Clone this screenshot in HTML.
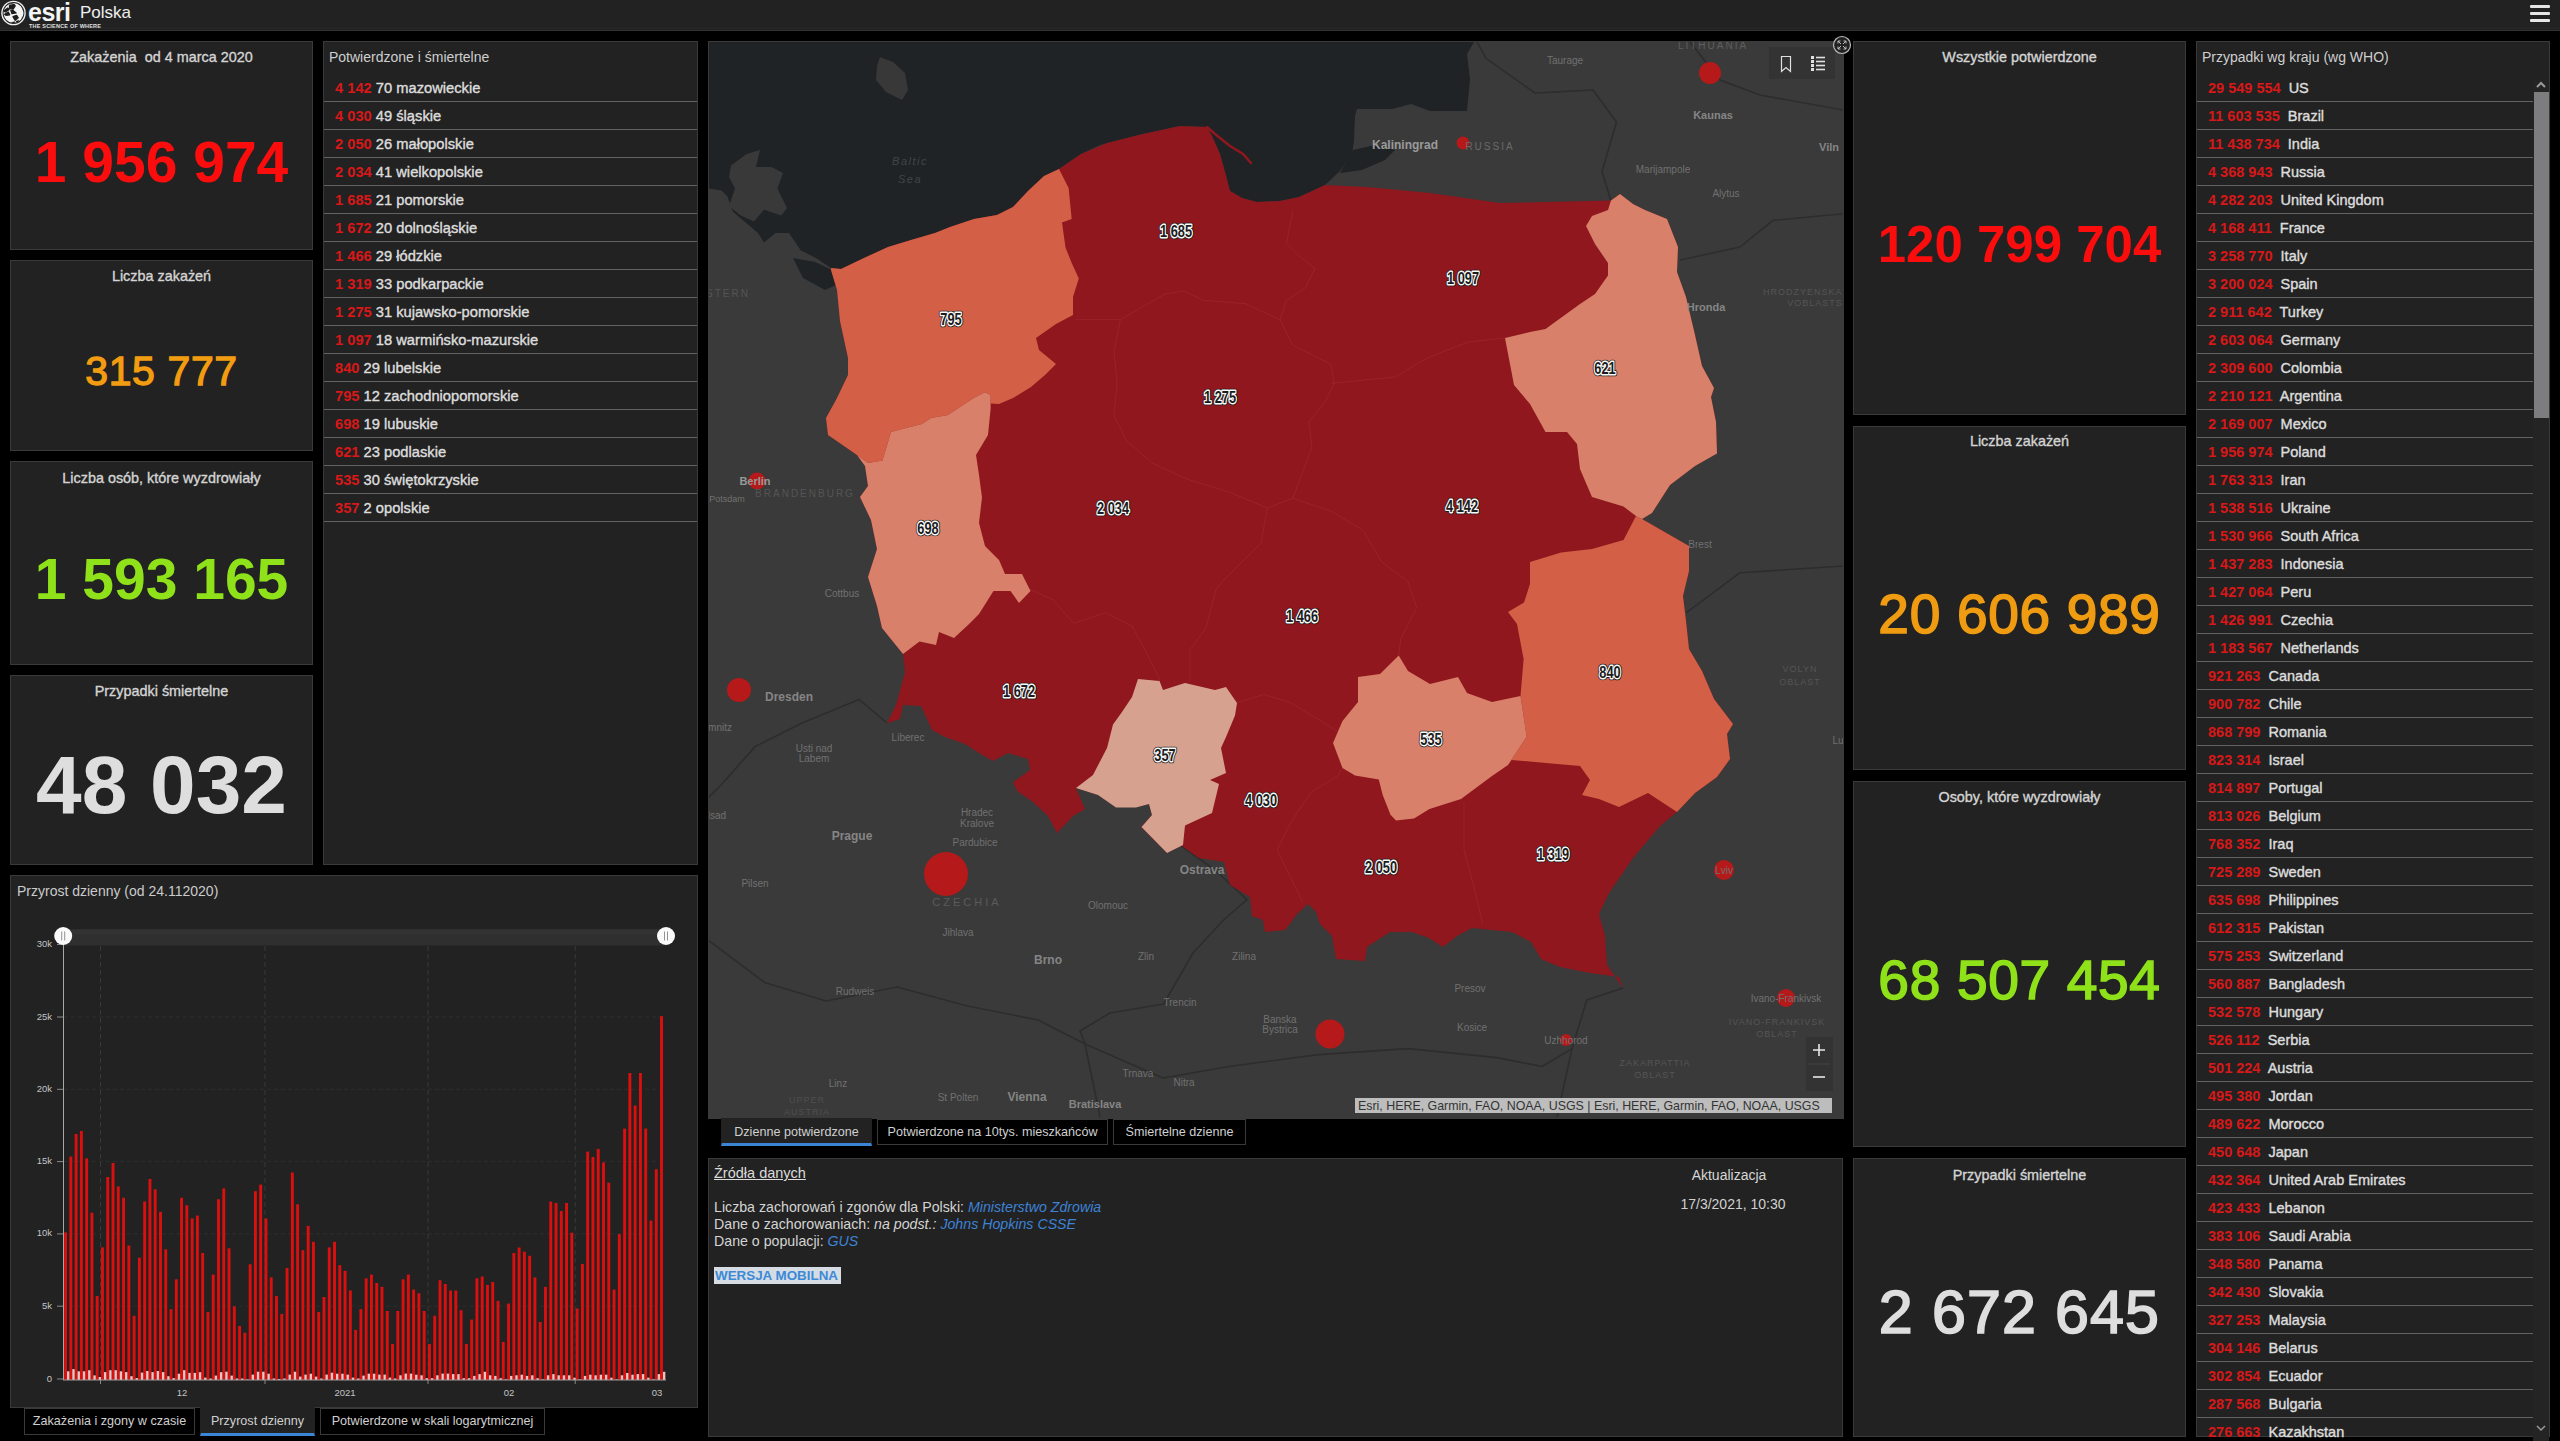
<!DOCTYPE html><html><head><meta charset="utf-8"><title>COVID-19 Polska</title><style>
*{box-sizing:border-box}
html,body{margin:0;padding:0;background:#000;width:2560px;height:1441px;overflow:hidden;font-family:"Liberation Sans",sans-serif;color:#d6d6d6}
.abs{position:absolute}
.hdr{position:absolute;left:0;top:0;width:2560px;height:31px;background:linear-gradient(#222 0,#222 28px,#282828 28px,#282828 29px,#1f1f1f 29px,#1f1f1f 30px,#343434 30px,#343434 31px)}
.pnl{position:absolute;background:#222;border:1px solid #3a3a3a}
.ttl{position:absolute;left:0;right:0;text-align:center;font-size:14.4px;font-weight:normal;-webkit-text-stroke:0.35px #d4d4d4;color:#d4d4d4;white-space:nowrap}
.num{position:absolute;left:0;right:0;text-align:center;font-weight:bold;white-space:nowrap;line-height:1}
.lt{position:absolute;font-size:14px;color:#cfcfcf;white-space:nowrap}
.row{position:absolute;left:0;height:28px;border-bottom:1px solid #626262;font-size:14.7px;font-weight:normal;-webkit-text-stroke:0.4px #dcdcdc;color:#dcdcdc;white-space:nowrap;line-height:28px}
.row b{color:#d81818;font-weight:bold;-webkit-text-stroke:0}
.tab{position:absolute;background:#000;border:1px solid #3a3a3a;font-size:12.6px;color:#d0d0d0;text-align:center;white-space:nowrap}
.tab.act{background:#222;border-color:#222;border-bottom:3px solid #3a86d4}
.ml{position:absolute;font-size:11px;color:#8a8a8a;white-space:nowrap;font-weight:bold;transform:translate(-50%,-50%)}
</style></head><body>
<div class="hdr"></div>
<svg class="abs" style="left:0;top:0" width="30" height="30" viewBox="0 0 30 30">
<circle cx="13.5" cy="13" r="11.6" fill="none" stroke="#f0f0f0" stroke-width="1.4"/>
<circle cx="13.5" cy="13" r="10" fill="#f4f4f4"/>
<clipPath id="gclip"><circle cx="13.5" cy="13" r="10"/></clipPath><g clip-path="url(#gclip)"><g fill="#1d1d1d" stroke="#1d1d1d" stroke-width="1.1" stroke-linejoin="round" transform="translate(13.5,13) scale(1.15) translate(-13.5,-13)">
<path d="M9 3.2 L12 2.4 L13.2 4 L10.2 5.2 Z"/>
<path d="M14.5 2.3 L18.5 3.2 L17.5 4.5 L14.6 3.6 Z"/>
<path d="M10 6.6 L13.8 5.4 L15 6.8 L13.2 9.6 L10.2 9.2 Z"/>
<path d="M4.8 11.2 L8.6 8.6 L9.6 10.1 L6.4 12.2 Z"/>
<path d="M5.8 14.2 L9 12.2 L10.2 14.6 L7 15 Z"/>
<path d="M11.2 10.8 L12.6 10.4 L15.8 13 L12.2 13.6 Z"/>
<path d="M13 16.2 L16.2 15 L17.6 17.2 L15 19.4 Z"/>
<path d="M16.2 20.2 L18 19.8 L18.6 22.6 L17 23 Z"/>
<path d="M12 21.4 L14.6 21 L14.8 23.4 L12.6 23.2 Z"/>
<path d="M3.2 15 L4.6 15.4 L6 19.6 L4.6 19.2 Z"/>
<path d="M21.6 7.6 L23 9 L22.8 10.6 L21.4 9.6 Z"/>
<path d="M21.4 16.6 L23 16.2 L22 19.8 L20.8 19.6 Z"/>
<path d="M4.2 7.6 L6 5.6 L6.6 6.6 L4.8 8.6 Z"/>
</g></g>
</svg>
<div class="abs" style="left:28px;top:-2px;font-size:25px;font-weight:bold;color:#f4f4f4;letter-spacing:-0.5px">esri</div>
<div class="abs" style="left:80px;top:3px;font-size:17px;color:#f0f0f0">Polska</div>
<div class="abs" style="left:29px;top:23px;font-size:5.5px;font-weight:bold;color:#e0e0e0;letter-spacing:0.2px">THE SCIENCE OF WHERE</div>
<div class="abs" style="left:2530px;top:5px;width:20px;height:3px;background:#e6e6e6;border-radius:1px"></div>
<div class="abs" style="left:2530px;top:12px;width:20px;height:3px;background:#e6e6e6;border-radius:1px"></div>
<div class="abs" style="left:2530px;top:19px;width:20px;height:3px;background:#e6e6e6;border-radius:1px"></div>
<div class="pnl" style="left:10px;top:41px;width:303px;height:209px;"><div class="ttl" style="top:7px">Zakażenia&nbsp; od 4 marca 2020</div><div class="num" style="top:91.5px;font-size:57px;color:#fb0d0d;font-weight:bold;letter-spacing:0px;">1 956 974</div></div>
<div class="pnl" style="left:10px;top:260px;width:303px;height:191px;"><div class="ttl" style="top:7px">Liczba zakażeń</div><div class="num" style="top:90.0px;font-size:41px;color:#f29c11;font-weight:normal;letter-spacing:0.6px;-webkit-text-stroke:1.3px #f29c11;">315 777</div></div>
<div class="pnl" style="left:10px;top:461px;width:303px;height:204px;"><div class="ttl" style="top:7.5px">Liczba osób, które wyzdrowiały</div><div class="num" style="top:88.5px;font-size:57px;color:#8fe11a;font-weight:bold;letter-spacing:0px;">1 593 165</div></div>
<div class="pnl" style="left:10px;top:675px;width:303px;height:190px;"><div class="ttl" style="top:7px">Przypadki śmiertelne</div><div class="num" style="top:68.0px;font-size:82px;color:#dedede;font-weight:bold;letter-spacing:0px;">48 032</div></div>
<div class="pnl" style="left:1853px;top:41px;width:333px;height:374px;"><div class="ttl" style="top:7px">Wszystkie potwierdzone</div><div class="num" style="top:176.5px;font-size:51px;color:#fb0d0d;font-weight:bold;letter-spacing:0px;">120 799 704</div></div>
<div class="pnl" style="left:1853px;top:426px;width:333px;height:344px;"><div class="ttl" style="top:6px">Liczba zakażeń</div><div class="num" style="top:159.5px;font-size:55px;color:#ef9c12;font-weight:normal;letter-spacing:0.7px;-webkit-text-stroke:1.6px #ef9c12;">20 606 989</div></div>
<div class="pnl" style="left:1853px;top:781px;width:333px;height:366px;"><div class="ttl" style="top:7px">Osoby, które wyzdrowiały</div><div class="num" style="top:170.5px;font-size:55px;color:#8fe11a;font-weight:normal;letter-spacing:0.7px;-webkit-text-stroke:1.6px #8fe11a;">68 507 454</div></div>
<div class="pnl" style="left:1853px;top:1158px;width:333px;height:279px;"><div class="ttl" style="top:7.5px">Przypadki śmiertelne</div><div class="num" style="top:122.5px;font-size:61px;color:#dedede;font-weight:normal;letter-spacing:1.1px;-webkit-text-stroke:1.7px #dedede;">2 672 645</div></div>
<div class="pnl" style="left:323px;top:41px;width:375px;height:824px;"><div class="lt" style="left:5px;top:7px">Potwierdzone i śmiertelne</div><div class="row" style="top:32px;width:373px;padding-left:11px"><b>4 142</b> 70 mazowieckie</div><div class="row" style="top:60px;width:373px;padding-left:11px"><b>4 030</b> 49 śląskie</div><div class="row" style="top:88px;width:373px;padding-left:11px"><b>2 050</b> 26 małopolskie</div><div class="row" style="top:116px;width:373px;padding-left:11px"><b>2 034</b> 41 wielkopolskie</div><div class="row" style="top:144px;width:373px;padding-left:11px"><b>1 685</b> 21 pomorskie</div><div class="row" style="top:172px;width:373px;padding-left:11px"><b>1 672</b> 20 dolnośląskie</div><div class="row" style="top:200px;width:373px;padding-left:11px"><b>1 466</b> 29 łódzkie</div><div class="row" style="top:228px;width:373px;padding-left:11px"><b>1 319</b> 33 podkarpackie</div><div class="row" style="top:256px;width:373px;padding-left:11px"><b>1 275</b> 31 kujawsko-pomorskie</div><div class="row" style="top:284px;width:373px;padding-left:11px"><b>1 097</b> 18 warmińsko-mazurskie</div><div class="row" style="top:312px;width:373px;padding-left:11px"><b>840</b> 29 lubelskie</div><div class="row" style="top:340px;width:373px;padding-left:11px"><b>795</b> 12 zachodniopomorskie</div><div class="row" style="top:368px;width:373px;padding-left:11px"><b>698</b> 19 lubuskie</div><div class="row" style="top:396px;width:373px;padding-left:11px"><b>621</b> 23 podlaskie</div><div class="row" style="top:424px;width:373px;padding-left:11px"><b>535</b> 30 świętokrzyskie</div><div class="row" style="top:452px;width:373px;padding-left:11px"><b>357</b> 2 opolskie</div></div>
<div class="pnl" style="left:2196px;top:41px;width:354px;height:1396px;"><div class="lt" style="left:5px;top:7px">Przypadki wg kraju (wg WHO)</div><div class="abs" style="left:0;top:32px;width:352px;height:1404px;overflow:hidden"><div class="row" style="top:0px;width:337px;padding-left:11px;font-size:14.5px"><b>29 549 554</b>&nbsp; US</div><div class="row" style="top:28px;width:337px;padding-left:11px;font-size:14.5px"><b>11 603 535</b>&nbsp; Brazil</div><div class="row" style="top:56px;width:337px;padding-left:11px;font-size:14.5px"><b>11 438 734</b>&nbsp; India</div><div class="row" style="top:84px;width:337px;padding-left:11px;font-size:14.5px"><b>4 368 943</b>&nbsp; Russia</div><div class="row" style="top:112px;width:337px;padding-left:11px;font-size:14.5px"><b>4 282 203</b>&nbsp; United Kingdom</div><div class="row" style="top:140px;width:337px;padding-left:11px;font-size:14.5px"><b>4 168 411</b>&nbsp; France</div><div class="row" style="top:168px;width:337px;padding-left:11px;font-size:14.5px"><b>3 258 770</b>&nbsp; Italy</div><div class="row" style="top:196px;width:337px;padding-left:11px;font-size:14.5px"><b>3 200 024</b>&nbsp; Spain</div><div class="row" style="top:224px;width:337px;padding-left:11px;font-size:14.5px"><b>2 911 642</b>&nbsp; Turkey</div><div class="row" style="top:252px;width:337px;padding-left:11px;font-size:14.5px"><b>2 603 064</b>&nbsp; Germany</div><div class="row" style="top:280px;width:337px;padding-left:11px;font-size:14.5px"><b>2 309 600</b>&nbsp; Colombia</div><div class="row" style="top:308px;width:337px;padding-left:11px;font-size:14.5px"><b>2 210 121</b>&nbsp; Argentina</div><div class="row" style="top:336px;width:337px;padding-left:11px;font-size:14.5px"><b>2 169 007</b>&nbsp; Mexico</div><div class="row" style="top:364px;width:337px;padding-left:11px;font-size:14.5px"><b>1 956 974</b>&nbsp; Poland</div><div class="row" style="top:392px;width:337px;padding-left:11px;font-size:14.5px"><b>1 763 313</b>&nbsp; Iran</div><div class="row" style="top:420px;width:337px;padding-left:11px;font-size:14.5px"><b>1 538 516</b>&nbsp; Ukraine</div><div class="row" style="top:448px;width:337px;padding-left:11px;font-size:14.5px"><b>1 530 966</b>&nbsp; South Africa</div><div class="row" style="top:476px;width:337px;padding-left:11px;font-size:14.5px"><b>1 437 283</b>&nbsp; Indonesia</div><div class="row" style="top:504px;width:337px;padding-left:11px;font-size:14.5px"><b>1 427 064</b>&nbsp; Peru</div><div class="row" style="top:532px;width:337px;padding-left:11px;font-size:14.5px"><b>1 426 991</b>&nbsp; Czechia</div><div class="row" style="top:560px;width:337px;padding-left:11px;font-size:14.5px"><b>1 183 567</b>&nbsp; Netherlands</div><div class="row" style="top:588px;width:337px;padding-left:11px;font-size:14.5px"><b>921 263</b>&nbsp; Canada</div><div class="row" style="top:616px;width:337px;padding-left:11px;font-size:14.5px"><b>900 782</b>&nbsp; Chile</div><div class="row" style="top:644px;width:337px;padding-left:11px;font-size:14.5px"><b>868 799</b>&nbsp; Romania</div><div class="row" style="top:672px;width:337px;padding-left:11px;font-size:14.5px"><b>823 314</b>&nbsp; Israel</div><div class="row" style="top:700px;width:337px;padding-left:11px;font-size:14.5px"><b>814 897</b>&nbsp; Portugal</div><div class="row" style="top:728px;width:337px;padding-left:11px;font-size:14.5px"><b>813 026</b>&nbsp; Belgium</div><div class="row" style="top:756px;width:337px;padding-left:11px;font-size:14.5px"><b>768 352</b>&nbsp; Iraq</div><div class="row" style="top:784px;width:337px;padding-left:11px;font-size:14.5px"><b>725 289</b>&nbsp; Sweden</div><div class="row" style="top:812px;width:337px;padding-left:11px;font-size:14.5px"><b>635 698</b>&nbsp; Philippines</div><div class="row" style="top:840px;width:337px;padding-left:11px;font-size:14.5px"><b>612 315</b>&nbsp; Pakistan</div><div class="row" style="top:868px;width:337px;padding-left:11px;font-size:14.5px"><b>575 253</b>&nbsp; Switzerland</div><div class="row" style="top:896px;width:337px;padding-left:11px;font-size:14.5px"><b>560 887</b>&nbsp; Bangladesh</div><div class="row" style="top:924px;width:337px;padding-left:11px;font-size:14.5px"><b>532 578</b>&nbsp; Hungary</div><div class="row" style="top:952px;width:337px;padding-left:11px;font-size:14.5px"><b>526 112</b>&nbsp; Serbia</div><div class="row" style="top:980px;width:337px;padding-left:11px;font-size:14.5px"><b>501 224</b>&nbsp; Austria</div><div class="row" style="top:1008px;width:337px;padding-left:11px;font-size:14.5px"><b>495 380</b>&nbsp; Jordan</div><div class="row" style="top:1036px;width:337px;padding-left:11px;font-size:14.5px"><b>489 622</b>&nbsp; Morocco</div><div class="row" style="top:1064px;width:337px;padding-left:11px;font-size:14.5px"><b>450 648</b>&nbsp; Japan</div><div class="row" style="top:1092px;width:337px;padding-left:11px;font-size:14.5px"><b>432 364</b>&nbsp; United Arab Emirates</div><div class="row" style="top:1120px;width:337px;padding-left:11px;font-size:14.5px"><b>423 433</b>&nbsp; Lebanon</div><div class="row" style="top:1148px;width:337px;padding-left:11px;font-size:14.5px"><b>383 106</b>&nbsp; Saudi Arabia</div><div class="row" style="top:1176px;width:337px;padding-left:11px;font-size:14.5px"><b>348 580</b>&nbsp; Panama</div><div class="row" style="top:1204px;width:337px;padding-left:11px;font-size:14.5px"><b>342 430</b>&nbsp; Slovakia</div><div class="row" style="top:1232px;width:337px;padding-left:11px;font-size:14.5px"><b>327 253</b>&nbsp; Malaysia</div><div class="row" style="top:1260px;width:337px;padding-left:11px;font-size:14.5px"><b>304 146</b>&nbsp; Belarus</div><div class="row" style="top:1288px;width:337px;padding-left:11px;font-size:14.5px"><b>302 854</b>&nbsp; Ecuador</div><div class="row" style="top:1316px;width:337px;padding-left:11px;font-size:14.5px"><b>287 568</b>&nbsp; Bulgaria</div><div class="row" style="top:1344px;width:337px;padding-left:11px;font-size:14.5px"><b>276 663</b>&nbsp; Kazakhstan</div></div><div class="abs" style="left:336px;top:38px;width:16px;height:1398px;background:#242424"></div><div class="abs" style="left:337px;top:50px;width:15px;height:326px;background:#7d7d80"></div><svg class="abs" style="left:338px;top:37px" width="12" height="10"><path d="M2 8 L6 4 L10 8" stroke="#9a9a9a" stroke-width="2" fill="none"/></svg><svg class="abs" style="left:338px;top:1381px" width="12" height="10"><path d="M2 3 L6 7 L10 3" stroke="#9a9a9a" stroke-width="1.5" fill="none"/></svg></div>
<div class="pnl" style="left:10px;top:875px;width:688px;height:533px;"></div>
<svg class="abs" style="left:10px;top:875px" width="688" height="533" viewBox="10 875 688 533">
<text x="17" y="896" font-size="14" fill="#cbcbcb" font-family="Liberation Sans">Przyrost dzienny (od 24.112020)</text>
<line x1="64" y1="944.5" x2="666" y2="944.5" stroke="#2e2e2e" stroke-width="1" stroke-dasharray="4 3"/>
<line x1="57" y1="944.5" x2="63" y2="944.5" stroke="#888" stroke-width="1"/>
<text x="52" y="947.0" font-size="9.5" fill="#c4c4c4" text-anchor="end" font-family="Liberation Sans">30k</text>
<line x1="64" y1="1017" x2="666" y2="1017" stroke="#2e2e2e" stroke-width="1" stroke-dasharray="4 3"/>
<line x1="57" y1="1017" x2="63" y2="1017" stroke="#888" stroke-width="1"/>
<text x="52" y="1019.5" font-size="9.5" fill="#c4c4c4" text-anchor="end" font-family="Liberation Sans">25k</text>
<line x1="64" y1="1089.3" x2="666" y2="1089.3" stroke="#2e2e2e" stroke-width="1" stroke-dasharray="4 3"/>
<line x1="57" y1="1089.3" x2="63" y2="1089.3" stroke="#888" stroke-width="1"/>
<text x="52" y="1091.8" font-size="9.5" fill="#c4c4c4" text-anchor="end" font-family="Liberation Sans">20k</text>
<line x1="64" y1="1161.6" x2="666" y2="1161.6" stroke="#2e2e2e" stroke-width="1" stroke-dasharray="4 3"/>
<line x1="57" y1="1161.6" x2="63" y2="1161.6" stroke="#888" stroke-width="1"/>
<text x="52" y="1164.1" font-size="9.5" fill="#c4c4c4" text-anchor="end" font-family="Liberation Sans">15k</text>
<line x1="64" y1="1233.9" x2="666" y2="1233.9" stroke="#2e2e2e" stroke-width="1" stroke-dasharray="4 3"/>
<line x1="57" y1="1233.9" x2="63" y2="1233.9" stroke="#888" stroke-width="1"/>
<text x="52" y="1236.4" font-size="9.5" fill="#c4c4c4" text-anchor="end" font-family="Liberation Sans">10k</text>
<line x1="64" y1="1306.2" x2="666" y2="1306.2" stroke="#2e2e2e" stroke-width="1" stroke-dasharray="4 3"/>
<line x1="57" y1="1306.2" x2="63" y2="1306.2" stroke="#888" stroke-width="1"/>
<text x="52" y="1308.7" font-size="9.5" fill="#c4c4c4" text-anchor="end" font-family="Liberation Sans">5k</text>
<line x1="64" y1="1379" x2="666" y2="1379" stroke="#2e2e2e" stroke-width="1" stroke-dasharray="4 3"/>
<line x1="57" y1="1379" x2="63" y2="1379" stroke="#888" stroke-width="1"/>
<text x="52" y="1381.5" font-size="9.5" fill="#c4c4c4" text-anchor="end" font-family="Liberation Sans">0</text>
<line x1="100.5" y1="946" x2="100.5" y2="1379" stroke="#383838" stroke-width="1" stroke-dasharray="5 3"/>
<line x1="100.5" y1="1380" x2="100.5" y2="1384" stroke="#888" stroke-width="1"/>
<line x1="265" y1="946" x2="265" y2="1379" stroke="#383838" stroke-width="1" stroke-dasharray="5 3"/>
<line x1="265" y1="1380" x2="265" y2="1384" stroke="#888" stroke-width="1"/>
<line x1="428" y1="946" x2="428" y2="1379" stroke="#383838" stroke-width="1" stroke-dasharray="5 3"/>
<line x1="428" y1="1380" x2="428" y2="1384" stroke="#888" stroke-width="1"/>
<line x1="575.2" y1="946" x2="575.2" y2="1379" stroke="#383838" stroke-width="1" stroke-dasharray="5 3"/>
<line x1="575.2" y1="1380" x2="575.2" y2="1384" stroke="#888" stroke-width="1"/>
<rect x="63" y="929.5" width="603" height="16" fill="#2f2f2f"/>
<rect x="63" y="929.5" width="603" height="5" fill="#333"/>
<line x1="63.5" y1="944" x2="63.5" y2="1380" stroke="#a8a8a8" stroke-width="1"/>
<rect x="64.10" y="1232.4" width="2.9" height="147.6" fill="#dc0f0f"/>
<rect x="69.37" y="1156.5" width="2.9" height="223.5" fill="#dc0f0f"/>
<rect x="74.65" y="1134.0" width="2.9" height="246.0" fill="#dc0f0f"/>
<rect x="79.92" y="1131.0" width="2.9" height="249.0" fill="#dc0f0f"/>
<rect x="85.20" y="1158.4" width="2.9" height="221.6" fill="#dc0f0f"/>
<rect x="90.47" y="1212.7" width="2.9" height="167.3" fill="#dc0f0f"/>
<rect x="95.74" y="1296.0" width="2.9" height="84.0" fill="#dc0f0f"/>
<rect x="101.02" y="1247.4" width="2.9" height="132.6" fill="#dc0f0f"/>
<rect x="106.29" y="1177.0" width="2.9" height="203.0" fill="#dc0f0f"/>
<rect x="111.57" y="1163.0" width="2.9" height="217.0" fill="#dc0f0f"/>
<rect x="116.84" y="1186.5" width="2.9" height="193.5" fill="#dc0f0f"/>
<rect x="122.11" y="1197.8" width="2.9" height="182.2" fill="#dc0f0f"/>
<rect x="127.39" y="1245.5" width="2.9" height="134.5" fill="#dc0f0f"/>
<rect x="132.66" y="1315.8" width="2.9" height="64.2" fill="#dc0f0f"/>
<rect x="137.94" y="1257.7" width="2.9" height="122.3" fill="#dc0f0f"/>
<rect x="143.21" y="1201.5" width="2.9" height="178.5" fill="#dc0f0f"/>
<rect x="148.48" y="1179.0" width="2.9" height="201.0" fill="#dc0f0f"/>
<rect x="153.76" y="1189.3" width="2.9" height="190.7" fill="#dc0f0f"/>
<rect x="159.03" y="1211.8" width="2.9" height="168.2" fill="#dc0f0f"/>
<rect x="164.31" y="1249.3" width="2.9" height="130.7" fill="#dc0f0f"/>
<rect x="169.58" y="1309.2" width="2.9" height="70.8" fill="#dc0f0f"/>
<rect x="174.85" y="1279.3" width="2.9" height="100.7" fill="#dc0f0f"/>
<rect x="180.13" y="1197.8" width="2.9" height="182.2" fill="#dc0f0f"/>
<rect x="185.40" y="1205.3" width="2.9" height="174.7" fill="#dc0f0f"/>
<rect x="190.68" y="1218.4" width="2.9" height="161.6" fill="#dc0f0f"/>
<rect x="195.95" y="1215.6" width="2.9" height="164.4" fill="#dc0f0f"/>
<rect x="201.22" y="1253.0" width="2.9" height="127.0" fill="#dc0f0f"/>
<rect x="206.50" y="1312.0" width="2.9" height="68.0" fill="#dc0f0f"/>
<rect x="211.77" y="1274.6" width="2.9" height="105.4" fill="#dc0f0f"/>
<rect x="217.05" y="1199.2" width="2.9" height="180.8" fill="#dc0f0f"/>
<rect x="222.32" y="1188.4" width="2.9" height="191.6" fill="#dc0f0f"/>
<rect x="227.59" y="1248.3" width="2.9" height="131.7" fill="#dc0f0f"/>
<rect x="232.87" y="1306.4" width="2.9" height="73.6" fill="#dc0f0f"/>
<rect x="238.14" y="1326.0" width="2.9" height="54.0" fill="#dc0f0f"/>
<rect x="243.42" y="1332.7" width="2.9" height="47.3" fill="#dc0f0f"/>
<rect x="248.69" y="1264.3" width="2.9" height="115.7" fill="#dc0f0f"/>
<rect x="253.96" y="1191.2" width="2.9" height="188.8" fill="#dc0f0f"/>
<rect x="259.24" y="1184.6" width="2.9" height="195.4" fill="#dc0f0f"/>
<rect x="264.51" y="1218.4" width="2.9" height="161.6" fill="#dc0f0f"/>
<rect x="269.79" y="1277.4" width="2.9" height="102.6" fill="#dc0f0f"/>
<rect x="275.06" y="1296.1" width="2.9" height="83.9" fill="#dc0f0f"/>
<rect x="280.33" y="1313.9" width="2.9" height="66.1" fill="#dc0f0f"/>
<rect x="285.61" y="1268.0" width="2.9" height="112.0" fill="#dc0f0f"/>
<rect x="290.88" y="1172.5" width="2.9" height="207.5" fill="#dc0f0f"/>
<rect x="296.16" y="1204.3" width="2.9" height="175.7" fill="#dc0f0f"/>
<rect x="301.43" y="1250.2" width="2.9" height="129.8" fill="#dc0f0f"/>
<rect x="306.70" y="1225.9" width="2.9" height="154.1" fill="#dc0f0f"/>
<rect x="311.98" y="1241.8" width="2.9" height="138.2" fill="#dc0f0f"/>
<rect x="317.25" y="1312.0" width="2.9" height="68.0" fill="#dc0f0f"/>
<rect x="322.53" y="1297.0" width="2.9" height="83.0" fill="#dc0f0f"/>
<rect x="327.80" y="1247.4" width="2.9" height="132.6" fill="#dc0f0f"/>
<rect x="333.07" y="1241.8" width="2.9" height="138.2" fill="#dc0f0f"/>
<rect x="338.35" y="1265.2" width="2.9" height="114.8" fill="#dc0f0f"/>
<rect x="343.62" y="1270.8" width="2.9" height="109.2" fill="#dc0f0f"/>
<rect x="348.90" y="1290.5" width="2.9" height="89.5" fill="#dc0f0f"/>
<rect x="354.17" y="1329.9" width="2.9" height="50.1" fill="#dc0f0f"/>
<rect x="359.44" y="1309.1" width="2.9" height="70.9" fill="#dc0f0f"/>
<rect x="364.72" y="1278.3" width="2.9" height="101.7" fill="#dc0f0f"/>
<rect x="369.99" y="1274.6" width="2.9" height="105.4" fill="#dc0f0f"/>
<rect x="375.27" y="1283.0" width="2.9" height="97.0" fill="#dc0f0f"/>
<rect x="380.54" y="1286.8" width="2.9" height="93.2" fill="#dc0f0f"/>
<rect x="385.81" y="1311.0" width="2.9" height="69.0" fill="#dc0f0f"/>
<rect x="391.09" y="1344.0" width="2.9" height="36.0" fill="#dc0f0f"/>
<rect x="396.36" y="1311.0" width="2.9" height="69.0" fill="#dc0f0f"/>
<rect x="401.64" y="1279.3" width="2.9" height="100.7" fill="#dc0f0f"/>
<rect x="406.91" y="1274.6" width="2.9" height="105.4" fill="#dc0f0f"/>
<rect x="412.18" y="1289.6" width="2.9" height="90.4" fill="#dc0f0f"/>
<rect x="417.46" y="1293.3" width="2.9" height="86.7" fill="#dc0f0f"/>
<rect x="422.73" y="1311.0" width="2.9" height="69.0" fill="#dc0f0f"/>
<rect x="428.01" y="1344.0" width="2.9" height="36.0" fill="#dc0f0f"/>
<rect x="433.28" y="1315.8" width="2.9" height="64.2" fill="#dc0f0f"/>
<rect x="438.55" y="1280.2" width="2.9" height="99.8" fill="#dc0f0f"/>
<rect x="443.83" y="1284.0" width="2.9" height="96.0" fill="#dc0f0f"/>
<rect x="449.10" y="1290.5" width="2.9" height="89.5" fill="#dc0f0f"/>
<rect x="454.38" y="1290.5" width="2.9" height="89.5" fill="#dc0f0f"/>
<rect x="459.65" y="1310.2" width="2.9" height="69.8" fill="#dc0f0f"/>
<rect x="464.92" y="1344.0" width="2.9" height="36.0" fill="#dc0f0f"/>
<rect x="470.20" y="1319.6" width="2.9" height="60.4" fill="#dc0f0f"/>
<rect x="475.47" y="1278.3" width="2.9" height="101.7" fill="#dc0f0f"/>
<rect x="480.75" y="1276.5" width="2.9" height="103.5" fill="#dc0f0f"/>
<rect x="486.02" y="1284.9" width="2.9" height="95.1" fill="#dc0f0f"/>
<rect x="491.29" y="1282.0" width="2.9" height="98.0" fill="#dc0f0f"/>
<rect x="496.57" y="1300.8" width="2.9" height="79.2" fill="#dc0f0f"/>
<rect x="501.84" y="1342.0" width="2.9" height="38.0" fill="#dc0f0f"/>
<rect x="507.12" y="1303.6" width="2.9" height="76.4" fill="#dc0f0f"/>
<rect x="512.39" y="1253.0" width="2.9" height="127.0" fill="#dc0f0f"/>
<rect x="517.66" y="1247.5" width="2.9" height="132.5" fill="#dc0f0f"/>
<rect x="522.94" y="1251.7" width="2.9" height="128.3" fill="#dc0f0f"/>
<rect x="528.21" y="1255.8" width="2.9" height="124.2" fill="#dc0f0f"/>
<rect x="533.49" y="1277.4" width="2.9" height="102.6" fill="#dc0f0f"/>
<rect x="538.76" y="1322.0" width="2.9" height="58.0" fill="#dc0f0f"/>
<rect x="544.03" y="1286.9" width="2.9" height="93.1" fill="#dc0f0f"/>
<rect x="549.31" y="1201.6" width="2.9" height="178.4" fill="#dc0f0f"/>
<rect x="554.58" y="1203.0" width="2.9" height="177.0" fill="#dc0f0f"/>
<rect x="559.86" y="1211.0" width="2.9" height="169.0" fill="#dc0f0f"/>
<rect x="565.13" y="1203.0" width="2.9" height="177.0" fill="#dc0f0f"/>
<rect x="570.40" y="1232.7" width="2.9" height="147.3" fill="#dc0f0f"/>
<rect x="575.68" y="1308.5" width="2.9" height="71.5" fill="#dc0f0f"/>
<rect x="580.95" y="1263.9" width="2.9" height="116.1" fill="#dc0f0f"/>
<rect x="586.23" y="1151.6" width="2.9" height="228.4" fill="#dc0f0f"/>
<rect x="591.50" y="1157.0" width="2.9" height="223.0" fill="#dc0f0f"/>
<rect x="596.77" y="1148.9" width="2.9" height="231.1" fill="#dc0f0f"/>
<rect x="602.05" y="1162.4" width="2.9" height="217.6" fill="#dc0f0f"/>
<rect x="607.32" y="1182.7" width="2.9" height="197.3" fill="#dc0f0f"/>
<rect x="612.60" y="1289.6" width="2.9" height="90.4" fill="#dc0f0f"/>
<rect x="617.87" y="1234.1" width="2.9" height="145.9" fill="#dc0f0f"/>
<rect x="623.14" y="1128.6" width="2.9" height="251.4" fill="#dc0f0f"/>
<rect x="628.42" y="1073.0" width="2.9" height="307.0" fill="#dc0f0f"/>
<rect x="633.69" y="1105.5" width="2.9" height="274.5" fill="#dc0f0f"/>
<rect x="638.97" y="1073.0" width="2.9" height="307.0" fill="#dc0f0f"/>
<rect x="644.24" y="1128.6" width="2.9" height="251.4" fill="#dc0f0f"/>
<rect x="649.51" y="1220.6" width="2.9" height="159.4" fill="#dc0f0f"/>
<rect x="654.79" y="1169.2" width="2.9" height="210.8" fill="#dc0f0f"/>
<rect x="660.06" y="1016.2" width="2.9" height="363.8" fill="#dc0f0f"/>
<rect x="67.00" y="1371.3" width="2.4" height="8.7" fill="#e9c4c3"/>
<rect x="72.27" y="1369.1" width="2.4" height="10.9" fill="#e9c4c3"/>
<rect x="77.55" y="1371.3" width="2.4" height="8.7" fill="#e9c4c3"/>
<rect x="82.82" y="1371.3" width="2.4" height="8.7" fill="#e9c4c3"/>
<rect x="88.10" y="1370.2" width="2.4" height="9.8" fill="#e9c4c3"/>
<rect x="93.37" y="1375.4" width="2.4" height="4.6" fill="#e9c4c3"/>
<rect x="98.64" y="1377.0" width="2.4" height="3.0" fill="#e9c4c3"/>
<rect x="103.92" y="1372.1" width="2.4" height="7.9" fill="#e9c4c3"/>
<rect x="109.19" y="1370.2" width="2.4" height="9.8" fill="#e9c4c3"/>
<rect x="114.47" y="1370.2" width="2.4" height="9.8" fill="#e9c4c3"/>
<rect x="119.74" y="1371.3" width="2.4" height="8.7" fill="#e9c4c3"/>
<rect x="125.01" y="1372.1" width="2.4" height="7.9" fill="#e9c4c3"/>
<rect x="130.29" y="1376.2" width="2.4" height="3.8" fill="#e9c4c3"/>
<rect x="135.56" y="1378.1" width="2.4" height="1.9" fill="#e9c4c3"/>
<rect x="140.84" y="1372.6" width="2.4" height="7.4" fill="#e9c4c3"/>
<rect x="146.11" y="1371.0" width="2.4" height="9.0" fill="#e9c4c3"/>
<rect x="151.38" y="1372.1" width="2.4" height="7.9" fill="#e9c4c3"/>
<rect x="156.66" y="1371.0" width="2.4" height="9.0" fill="#e9c4c3"/>
<rect x="161.93" y="1372.1" width="2.4" height="7.9" fill="#e9c4c3"/>
<rect x="167.21" y="1376.2" width="2.4" height="3.8" fill="#e9c4c3"/>
<rect x="172.48" y="1378.1" width="2.4" height="1.9" fill="#e9c4c3"/>
<rect x="177.75" y="1373.7" width="2.4" height="6.3" fill="#e9c4c3"/>
<rect x="183.03" y="1370.2" width="2.4" height="9.8" fill="#e9c4c3"/>
<rect x="188.30" y="1372.9" width="2.4" height="7.1" fill="#e9c4c3"/>
<rect x="193.58" y="1372.9" width="2.4" height="7.1" fill="#e9c4c3"/>
<rect x="198.85" y="1372.2" width="2.4" height="7.8" fill="#e9c4c3"/>
<rect x="204.12" y="1377.6" width="2.4" height="2.4" fill="#e9c4c3"/>
<rect x="209.40" y="1378.5" width="2.4" height="1.5" fill="#e9c4c3"/>
<rect x="214.67" y="1375.6" width="2.4" height="4.4" fill="#e9c4c3"/>
<rect x="219.95" y="1372.2" width="2.4" height="7.8" fill="#e9c4c3"/>
<rect x="225.22" y="1371.7" width="2.4" height="8.3" fill="#e9c4c3"/>
<rect x="230.49" y="1375.6" width="2.4" height="4.4" fill="#e9c4c3"/>
<rect x="235.77" y="1378.5" width="2.4" height="1.5" fill="#e9c4c3"/>
<rect x="241.04" y="1378.5" width="2.4" height="1.5" fill="#e9c4c3"/>
<rect x="246.32" y="1379.5" width="2.4" height="0.5" fill="#e9c4c3"/>
<rect x="251.59" y="1374.6" width="2.4" height="5.4" fill="#e9c4c3"/>
<rect x="256.86" y="1371.7" width="2.4" height="8.3" fill="#e9c4c3"/>
<rect x="262.14" y="1371.7" width="2.4" height="8.3" fill="#e9c4c3"/>
<rect x="267.41" y="1373.7" width="2.4" height="6.3" fill="#e9c4c3"/>
<rect x="272.69" y="1378.5" width="2.4" height="1.5" fill="#e9c4c3"/>
<rect x="277.96" y="1379.0" width="2.4" height="1.0" fill="#e9c4c3"/>
<rect x="283.23" y="1378.5" width="2.4" height="1.5" fill="#e9c4c3"/>
<rect x="288.51" y="1374.6" width="2.4" height="5.4" fill="#e9c4c3"/>
<rect x="293.78" y="1371.7" width="2.4" height="8.3" fill="#e9c4c3"/>
<rect x="299.06" y="1376.6" width="2.4" height="3.4" fill="#e9c4c3"/>
<rect x="304.33" y="1374.6" width="2.4" height="5.4" fill="#e9c4c3"/>
<rect x="309.60" y="1373.7" width="2.4" height="6.3" fill="#e9c4c3"/>
<rect x="314.88" y="1376.6" width="2.4" height="3.4" fill="#e9c4c3"/>
<rect x="320.15" y="1378.5" width="2.4" height="1.5" fill="#e9c4c3"/>
<rect x="325.43" y="1374.6" width="2.4" height="5.4" fill="#e9c4c3"/>
<rect x="330.70" y="1372.7" width="2.4" height="7.3" fill="#e9c4c3"/>
<rect x="335.97" y="1373.7" width="2.4" height="6.3" fill="#e9c4c3"/>
<rect x="341.25" y="1373.7" width="2.4" height="6.3" fill="#e9c4c3"/>
<rect x="346.52" y="1374.6" width="2.4" height="5.4" fill="#e9c4c3"/>
<rect x="351.80" y="1377.6" width="2.4" height="2.4" fill="#e9c4c3"/>
<rect x="357.07" y="1378.5" width="2.4" height="1.5" fill="#e9c4c3"/>
<rect x="362.34" y="1375.6" width="2.4" height="4.4" fill="#e9c4c3"/>
<rect x="367.62" y="1373.7" width="2.4" height="6.3" fill="#e9c4c3"/>
<rect x="372.89" y="1373.7" width="2.4" height="6.3" fill="#e9c4c3"/>
<rect x="378.17" y="1374.6" width="2.4" height="5.4" fill="#e9c4c3"/>
<rect x="383.44" y="1374.6" width="2.4" height="5.4" fill="#e9c4c3"/>
<rect x="388.71" y="1377.6" width="2.4" height="2.4" fill="#e9c4c3"/>
<rect x="393.99" y="1378.5" width="2.4" height="1.5" fill="#e9c4c3"/>
<rect x="399.26" y="1375.3" width="2.4" height="4.7" fill="#e9c4c3"/>
<rect x="404.54" y="1373.6" width="2.4" height="6.4" fill="#e9c4c3"/>
<rect x="409.81" y="1373.6" width="2.4" height="6.4" fill="#e9c4c3"/>
<rect x="415.08" y="1374.7" width="2.4" height="5.3" fill="#e9c4c3"/>
<rect x="420.36" y="1375.3" width="2.4" height="4.7" fill="#e9c4c3"/>
<rect x="425.63" y="1378.2" width="2.4" height="1.8" fill="#e9c4c3"/>
<rect x="430.91" y="1378.2" width="2.4" height="1.8" fill="#e9c4c3"/>
<rect x="436.18" y="1375.3" width="2.4" height="4.7" fill="#e9c4c3"/>
<rect x="441.45" y="1373.6" width="2.4" height="6.4" fill="#e9c4c3"/>
<rect x="446.73" y="1373.6" width="2.4" height="6.4" fill="#e9c4c3"/>
<rect x="452.00" y="1374.1" width="2.4" height="5.9" fill="#e9c4c3"/>
<rect x="457.28" y="1374.1" width="2.4" height="5.9" fill="#e9c4c3"/>
<rect x="462.55" y="1378.2" width="2.4" height="1.8" fill="#e9c4c3"/>
<rect x="467.82" y="1378.2" width="2.4" height="1.8" fill="#e9c4c3"/>
<rect x="473.10" y="1375.9" width="2.4" height="4.1" fill="#e9c4c3"/>
<rect x="478.37" y="1374.1" width="2.4" height="5.9" fill="#e9c4c3"/>
<rect x="483.65" y="1371.8" width="2.4" height="8.2" fill="#e9c4c3"/>
<rect x="488.92" y="1375.3" width="2.4" height="4.7" fill="#e9c4c3"/>
<rect x="494.19" y="1375.9" width="2.4" height="4.1" fill="#e9c4c3"/>
<rect x="499.47" y="1378.2" width="2.4" height="1.8" fill="#e9c4c3"/>
<rect x="504.74" y="1379.4" width="2.4" height="0.6" fill="#e9c4c3"/>
<rect x="510.02" y="1375.9" width="2.4" height="4.1" fill="#e9c4c3"/>
<rect x="515.29" y="1375.3" width="2.4" height="4.7" fill="#e9c4c3"/>
<rect x="520.56" y="1374.7" width="2.4" height="5.3" fill="#e9c4c3"/>
<rect x="525.84" y="1375.9" width="2.4" height="4.1" fill="#e9c4c3"/>
<rect x="531.11" y="1375.3" width="2.4" height="4.7" fill="#e9c4c3"/>
<rect x="536.39" y="1378.2" width="2.4" height="1.8" fill="#e9c4c3"/>
<rect x="541.66" y="1379.4" width="2.4" height="0.6" fill="#e9c4c3"/>
<rect x="546.93" y="1375.3" width="2.4" height="4.7" fill="#e9c4c3"/>
<rect x="552.21" y="1374.1" width="2.4" height="5.9" fill="#e9c4c3"/>
<rect x="557.48" y="1375.3" width="2.4" height="4.7" fill="#e9c4c3"/>
<rect x="562.76" y="1375.3" width="2.4" height="4.7" fill="#e9c4c3"/>
<rect x="568.03" y="1375.3" width="2.4" height="4.7" fill="#e9c4c3"/>
<rect x="573.30" y="1377.7" width="2.4" height="2.3" fill="#e9c4c3"/>
<rect x="578.58" y="1379.4" width="2.4" height="0.6" fill="#e9c4c3"/>
<rect x="583.85" y="1375.9" width="2.4" height="4.1" fill="#e9c4c3"/>
<rect x="589.13" y="1374.7" width="2.4" height="5.3" fill="#e9c4c3"/>
<rect x="594.40" y="1375.3" width="2.4" height="4.7" fill="#e9c4c3"/>
<rect x="599.67" y="1374.7" width="2.4" height="5.3" fill="#e9c4c3"/>
<rect x="604.95" y="1374.7" width="2.4" height="5.3" fill="#e9c4c3"/>
<rect x="610.22" y="1377.7" width="2.4" height="2.3" fill="#e9c4c3"/>
<rect x="615.50" y="1379.4" width="2.4" height="0.6" fill="#e9c4c3"/>
<rect x="620.77" y="1375.3" width="2.4" height="4.7" fill="#e9c4c3"/>
<rect x="626.04" y="1373.0" width="2.4" height="7.0" fill="#e9c4c3"/>
<rect x="631.32" y="1374.7" width="2.4" height="5.3" fill="#e9c4c3"/>
<rect x="636.59" y="1374.1" width="2.4" height="5.9" fill="#e9c4c3"/>
<rect x="641.87" y="1374.1" width="2.4" height="5.9" fill="#e9c4c3"/>
<rect x="647.14" y="1377.7" width="2.4" height="2.3" fill="#e9c4c3"/>
<rect x="652.41" y="1379.4" width="2.4" height="0.6" fill="#e9c4c3"/>
<rect x="657.69" y="1374.1" width="2.4" height="5.9" fill="#e9c4c3"/>
<rect x="662.96" y="1371.8" width="2.4" height="8.2" fill="#e9c4c3"/>
<line x1="63" y1="1380" x2="666" y2="1380" stroke="#9a9a9a" stroke-width="1"/>
<text x="182" y="1396" font-size="9.5" fill="#c4c4c4" text-anchor="middle" font-family="Liberation Sans">12</text>
<text x="345" y="1396" font-size="9.5" fill="#c4c4c4" text-anchor="middle" font-family="Liberation Sans">2021</text>
<text x="509" y="1396" font-size="9.5" fill="#c4c4c4" text-anchor="middle" font-family="Liberation Sans">02</text>
<text x="657" y="1396" font-size="9.5" fill="#c4c4c4" text-anchor="middle" font-family="Liberation Sans">03</text>
<circle cx="63.2" cy="936" r="9" fill="#fafafa"/>
<line x1="61.7" y1="931.5" x2="61.7" y2="940.5" stroke="#777" stroke-width="0.8"/>
<line x1="64.7" y1="931.5" x2="64.7" y2="940.5" stroke="#777" stroke-width="0.8"/>
<circle cx="666" cy="936" r="9" fill="#fafafa"/>
<line x1="664.5" y1="931.5" x2="664.5" y2="940.5" stroke="#777" stroke-width="0.8"/>
<line x1="667.5" y1="931.5" x2="667.5" y2="940.5" stroke="#777" stroke-width="0.8"/>
</svg>
<div class="tab" style="left:24px;top:1408px;width:171px;height:27px;line-height:25px">Zakażenia i zgony w czasie</div>
<div class="tab act" style="left:200px;top:1407px;width:115px;height:29px;line-height:27px">Przyrost dzienny</div>
<div class="tab" style="left:320px;top:1408px;width:225px;height:27px;line-height:25px">Potwierdzone w skali logarytmicznej</div>
<div class="pnl" style="left:708px;top:41px;width:1136px;height:1078px;"></div>
<svg class="abs" style="left:709px;top:42px" width="1134" height="1076" viewBox="709 42 1134 1076">
<rect x="709" y="42" width="1134" height="1076" fill="#3a3a3a"/>
<polygon points="709,42 1474,42 1467,54 1470,79 1467,111 1430,111 1411,104 1392,109 1357,109 1355,116 1354,141 1352,154 1340,171 1325,185 1299,197 1280,201 1257,202 1242,198 1230,191 1225,172 1220,154 1212,136 1207,127 1180,126 1143,134 1100,145 1081,154 1059,169 1044,176 1028,191 1013,207 997,215 974,219 950,227 935,233 911,240 888,247 864,258 841,269 831,268 816,258 800.6,250.3 789,233 775.5,233 764,242.6 758,233 746.6,223.3 733,211.7 727.3,196.3 721.5,190.5 709,188.6" fill="#1f2326"/>
<polygon points="731,165.4 746.6,154 760,150 756,167 771.6,167 783,173 777.4,188.6 787,208 781.3,215.6 764,209.8 754,221.4 740.8,215.6 729,206 735,188.6 729,177" fill="#393939"/>
<polygon points="880,57 893,62 905,73 908,90 902,100 886,92 876,80 877,66" fill="#383838"/>
<polygon points="793,258 815,262 832,270 836,285 825,290 803,278" fill="#1f2326"/>
<polyline points="708,798 722,784 755,746.6 802,723 859,699.4 887,723" fill="none" stroke="#2d2d2d" stroke-width="1.6" stroke-linejoin="round"/>
<polyline points="708,940 764.6,982.5 826,1001 897,987 967.4,1006 1038,1020 1085,1044 1100,1117" fill="none" stroke="#2d2d2d" stroke-width="1.6" stroke-linejoin="round"/>
<polyline points="1179,844 1215,870 1247,899.6 1223,920.5 1193,953 1163.5,1004 1110,1013 1080,1031 1085,1044" fill="none" stroke="#2d2d2d" stroke-width="1.6" stroke-linejoin="round"/>
<polyline points="1085,1044 1163,1078 1229,1066.5 1318.5,1054.6 1408,1048.6 1497,1057.6 1542,1066.5 1572,1048.6" fill="none" stroke="#2d2d2d" stroke-width="1.6" stroke-linejoin="round"/>
<polyline points="1623,988 1586.7,1000 1572,1048.6 1557,1117" fill="none" stroke="#2d2d2d" stroke-width="1.6" stroke-linejoin="round"/>
<polyline points="1686.5,612.6 1740,572.7 1843,566" fill="none" stroke="#2d2d2d" stroke-width="1.6" stroke-linejoin="round"/>
<polyline points="1680,260 1740,247 1773,220.4 1843,213.8" fill="none" stroke="#2d2d2d" stroke-width="1.6" stroke-linejoin="round"/>
<polyline points="1610.7,200 1602,171.6 1616.5,122 1593,90 1535,93 1486,58.4 1477,42" fill="none" stroke="#2d2d2d" stroke-width="1.6" stroke-linejoin="round"/>
<polyline points="1690,42 1720,80 1760,95 1843,110" fill="none" stroke="#2d2d2d" stroke-width="1.6" stroke-linejoin="round"/>
<polygon points="1353,150 1375,145 1395,150 1385,160 1362,170 1340,173" fill="#1f2326"/>
<polygon points="831,268 841,269 864,258 888,247 911,240 935,233 950,227 974,219 997,215 1013,207 1028,191 1044,176 1059,169 1081,154 1107,143 1143,134 1180,126 1207,127 1212,136 1220,154 1225,172 1230,191 1242,198 1257,202 1280,201 1299,197 1325,185 1367,187 1430,193 1500,203 1611,200.6 1620,194 1633,204 1645,210 1667,219 1678,247 1677,272 1686,297 1695,335 1702,366 1714,388 1711,397 1716,422 1717,453 1695,466 1670,485 1652,513 1642,519 1689,546 1689,571 1683,596 1686,621 1689,649 1702,671 1714,699 1733,724 1727,734 1730,759 1717,777 1695,793 1677,812 1660,826 1633,858 1609,893 1599,914 1605,936 1607,965 1623,988 1619,977 1590,973 1560,967 1541,959 1531,942 1512,932 1492,930 1472,928 1457,936 1443,947 1429,938 1412,932 1390,932 1367,947 1365,961 1336,959 1332,936 1320,924 1316,912 1308,904 1297,914 1285,930 1265,932 1263,920 1252,916 1250,897 1230,885 1224,862 1199,858 1179,844 1183,845 1167,853 1141,827 1152,815 1149,804 1136,807 1116,807 1098,795 1076,788 1085,809 1073,816 1057,833 1048,816 1033,802 1017,791 1013,782 1030,770 1028,759 1008,753 993,761 979,753 965,744 945,737 932,730 921,706 903,705 900,719 887,723 896,705 905,672 903,654 882,628 877,606 868,577 877,549 871,520 860,497 868,486 865,466 857,455 828,435 826,418 837,398 848,375 848,358 840,321 837,290 831,270" fill="#8f171d"/>
<polyline points="1293,211 1286.4,243 1299,255.8 1315,268.5 1305.6,287.7 1286.4,300.4 1280,319.6" fill="none" stroke="#a1323a" stroke-width="1" opacity="0.45"/>
<polyline points="1075.8,319.6 1120.4,319.6 1165,294 1184,291 1203.4,300.4 1245,303.6 1280,319.6" fill="none" stroke="#a1323a" stroke-width="1" opacity="0.45"/>
<polyline points="1280,319.6 1292.8,345 1331,364.3 1334,383.4 1324.7,402.6 1308.8,421.7 1312,447.3 1302.4,472.8 1292.8,498.3 1267.3,508" fill="none" stroke="#a1323a" stroke-width="1" opacity="0.45"/>
<polyline points="1331,383.4 1363,380.2 1395,377 1427,358 1468,342 1505,338" fill="none" stroke="#a1323a" stroke-width="1" opacity="0.45"/>
<polyline points="1120.4,319.6 1114,351.5 1117,383.4 1114,415.3 1126.8,440.9 1152.4,463.2 1187.5,479.2 1229,492 1267.3,508" fill="none" stroke="#a1323a" stroke-width="1" opacity="0.45"/>
<polyline points="1267.3,508 1261,543 1241.7,562.2 1222.6,581.3 1216,590 1205.7,628.6 1190,649.7 1190,681.3" fill="none" stroke="#a1323a" stroke-width="1" opacity="0.45"/>
<polyline points="1292.8,498.3 1331,511 1363,530.3 1382,562.2 1407.7,581.3 1416.7,607.5 1400.8,639 1398.7,655.5" fill="none" stroke="#a1323a" stroke-width="1" opacity="0.45"/>
<polyline points="1029,589 1052.7,599.6 1073.8,623.3 1105.5,612.7 1131.9,626 1147.7,655 1158.2,676 1159.5,681" fill="none" stroke="#a1323a" stroke-width="1" opacity="0.45"/>
<polyline points="1237.3,702.4 1263.7,694.5 1290,702.4 1316.5,718.2 1337.5,731.4" fill="none" stroke="#a1323a" stroke-width="1" opacity="0.45"/>
<polyline points="1342.5,768 1337.5,776.2 1311.2,792 1290,823.7 1277,850 1290,876.5 1303,902.8" fill="none" stroke="#a1323a" stroke-width="1" opacity="0.45"/>
<polyline points="1464,802.6 1464,850 1474.7,889.6 1482.6,924" fill="none" stroke="#a1323a" stroke-width="1" opacity="0.45"/>
<polygon points="831,268 841,269 864,258 888,247 911,240 935,233 950,227 974,219 997,215 1013,207 1028,191 1044,176 1059,169 1068.6,188 1071.7,219 1062,222.4 1065.5,247.4 1071.7,263 1078.8,278.5 1073,297 1073,315 1056,324 1036,338 1039,350 1056,364 1045,375 1031,387 1013,398 999,404 990.6,403.6 990.6,395 985,392.3 973.6,398 948,415 931,418 922,424 902,429 891,432 882.5,460.5 868,463 857,455 828,435 826,418 837,398 848,375 848,358 840,321 837,290 831,270" fill="#d35f46"/>
<polygon points="1642,519 1689,546 1689,571 1683,596 1686,621 1689,649 1702,671 1714,699 1733,724 1727,734 1730,759 1717,777 1695,793 1677,812 1648,793 1619,807 1599,799 1582,795 1590,780 1580,766 1511.6,760 1508,765 1526.7,736.7 1520.5,696 1523.6,659 1517,624 1508,612 1524,602.5 1530,584 1530,562 1561,552.5 1592,549 1623.5,540 1636,516" fill="#d35f46"/>
<polygon points="857,455 868,463 882.5,460.5 891,432 902,429 922,424 931,418 948,415 973.6,398 985,392.3 990.6,395 990.6,409 988,435 976,455 979,475 982,497.5 979,523 985,546 999,560 1005,574 1022,574 1030.5,591 1019,603 1010.5,591 993.5,591 979,614 968,625 954,638 939,632 936,645 919.5,641.5 903,654 882,628 877,606 868,577 877,549 871,520 860,497 868,486 865,466" fill="#d8806a"/>
<polygon points="1611,200.6 1620,194 1633,204 1645,210 1667,219 1678,247 1677,272 1686,297 1695,335 1702,366 1714,388 1711,397 1716,422 1717,453.5 1695,466 1670,485 1652,513 1642,519 1636,516 1623.5,506.6 1592,497 1580,469 1577,444 1567,432 1545.5,432 1530,404 1514,385 1505,338 1530,332 1545.5,329 1580,304 1595,294 1608,275.5 1608,263 1595,244 1586,226 1592,216 1608,210" fill="#d8806a"/>
<polygon points="1398.7,655.5 1408,671 1430,684 1458,677 1467,693 1492,702 1520.5,696 1526.7,736.7 1508,765 1492,776 1461,799 1429.5,809 1414,818.6 1396,820.5 1390.5,814.7 1382.7,795 1378.75,779.5 1355,775.6 1342.5,768 1333,743 1342.5,721 1358,702 1358,677 1380,674" fill="#d8806a"/>
<polygon points="1076,788 1093,775 1107,748 1113,724.5 1122,712 1132,697 1138,679 1159.5,681 1163,690 1185,683 1215,690 1226,687 1237,703 1235,715.5 1226,737 1221,748 1226,773 1210,780 1219,784 1212,813 1185,825.5 1183,845 1167,853 1141.5,827 1152,815 1149,804 1136,807.5 1116,807.5 1098,795" fill="#d6a28f"/>
<polyline points="1207,127 1215,134 1230,146 1243,154 1251,163" fill="none" stroke="#8f171d" stroke-width="2.5" stroke-linecap="round"/>
<circle cx="1710" cy="73" r="11" fill="#bd1717" opacity="0.95"/>
<circle cx="1463" cy="143" r="6.5" fill="#bd1717" opacity="0.95"/>
<circle cx="757" cy="481" r="8.5" fill="#bd1717" opacity="0.95"/>
<circle cx="739" cy="690" r="12" fill="#bd1717" opacity="0.95"/>
<circle cx="946" cy="874" r="22" fill="#bd1717" opacity="0.95"/>
<circle cx="1330" cy="1034" r="14.5" fill="#bd1717" opacity="0.95"/>
<circle cx="1724" cy="870" r="10" fill="#bd1717" opacity="0.95"/>
<circle cx="1786" cy="998" r="9" fill="#bd1717" opacity="0.95"/>
<circle cx="1566" cy="1040" r="6" fill="#bd1717" opacity="0.95"/>
<text x="910" y="164.8" font-size="11" fill="#40454a" font-weight="normal" font-style="italic" letter-spacing="1.5" text-anchor="middle" font-family="Liberation Sans">Baltic</text>
<text x="910" y="182.8" font-size="11" fill="#40454a" font-weight="normal" font-style="italic" letter-spacing="1.5" text-anchor="middle" font-family="Liberation Sans">Sea</text>
<text x="1405" y="149.2" font-size="12" fill="#9a9a9a" font-weight="bold" font-style="normal" letter-spacing="0" text-anchor="middle" font-family="Liberation Sans">Kaliningrad</text>
<text x="1490" y="149.5" font-size="10" fill="#6a6a6a" font-weight="normal" font-style="normal" letter-spacing="2" text-anchor="middle" font-family="Liberation Sans">RUSSIA</text>
<text x="1713" y="48.5" font-size="10" fill="#5f5f5f" font-weight="normal" font-style="normal" letter-spacing="2" text-anchor="middle" font-family="Liberation Sans">LITHUANIA</text>
<text x="1565" y="63.5" font-size="10" fill="#717171" font-weight="normal" font-style="normal" letter-spacing="0" text-anchor="middle" font-family="Liberation Sans">Taurage</text>
<text x="1713" y="118.8" font-size="11" fill="#858585" font-weight="bold" font-style="normal" letter-spacing="0" text-anchor="middle" font-family="Liberation Sans">Kaunas</text>
<text x="1829" y="150.8" font-size="11" fill="#858585" font-weight="bold" font-style="normal" letter-spacing="0" text-anchor="middle" font-family="Liberation Sans">Viln</text>
<text x="1663" y="172.5" font-size="10" fill="#717171" font-weight="normal" font-style="normal" letter-spacing="0" text-anchor="middle" font-family="Liberation Sans">Marijampole</text>
<text x="1726" y="196.5" font-size="10" fill="#717171" font-weight="normal" font-style="normal" letter-spacing="0" text-anchor="middle" font-family="Liberation Sans">Alytus</text>
<text x="1706" y="310.9" font-size="11" fill="#858585" font-weight="bold" font-style="normal" letter-spacing="0" text-anchor="middle" font-family="Liberation Sans">Hronda</text>
<text x="1809" y="295.1" font-size="9" fill="#555" font-weight="normal" font-style="normal" letter-spacing="1" text-anchor="middle" font-family="Liberation Sans">HRODZYENSKAYA</text>
<text x="1815" y="306.1" font-size="9" fill="#555" font-weight="normal" font-style="normal" letter-spacing="1" text-anchor="middle" font-family="Liberation Sans">VOBLASTS</text>
<text x="1700" y="547.5" font-size="10" fill="#717171" font-weight="normal" font-style="normal" letter-spacing="0" text-anchor="middle" font-family="Liberation Sans">Brest</text>
<text x="1800" y="672.1" font-size="9" fill="#555" font-weight="normal" font-style="normal" letter-spacing="1" text-anchor="middle" font-family="Liberation Sans">VOLYN</text>
<text x="1800" y="685.1" font-size="9" fill="#555" font-weight="normal" font-style="normal" letter-spacing="1" text-anchor="middle" font-family="Liberation Sans">OBLAST</text>
<text x="1838" y="743.5" font-size="10" fill="#717171" font-weight="normal" font-style="normal" letter-spacing="0" text-anchor="middle" font-family="Liberation Sans">Lu</text>
<text x="1724" y="873.5" font-size="10" fill="#717171" font-weight="normal" font-style="normal" letter-spacing="0" text-anchor="middle" font-family="Liberation Sans">Lviv</text>
<text x="1786" y="1001.5" font-size="10" fill="#717171" font-weight="normal" font-style="normal" letter-spacing="0" text-anchor="middle" font-family="Liberation Sans">Ivano-Frankivsk</text>
<text x="1777" y="1025.2" font-size="9" fill="#555" font-weight="normal" font-style="normal" letter-spacing="1" text-anchor="middle" font-family="Liberation Sans">IVANO-FRANKIVSK</text>
<text x="1777" y="1037.2" font-size="9" fill="#555" font-weight="normal" font-style="normal" letter-spacing="1" text-anchor="middle" font-family="Liberation Sans">OBLAST</text>
<text x="1655" y="1066.2" font-size="9" fill="#555" font-weight="normal" font-style="normal" letter-spacing="1" text-anchor="middle" font-family="Liberation Sans">ZAKARPATTIA</text>
<text x="1655" y="1078.2" font-size="9" fill="#555" font-weight="normal" font-style="normal" letter-spacing="1" text-anchor="middle" font-family="Liberation Sans">OBLAST</text>
<text x="1566" y="1043.5" font-size="10" fill="#717171" font-weight="normal" font-style="normal" letter-spacing="0" text-anchor="middle" font-family="Liberation Sans">Uzhhorod</text>
<text x="1470" y="991.5" font-size="10" fill="#717171" font-weight="normal" font-style="normal" letter-spacing="0" text-anchor="middle" font-family="Liberation Sans">Presov</text>
<text x="1472" y="1030.5" font-size="10" fill="#717171" font-weight="normal" font-style="normal" letter-spacing="0" text-anchor="middle" font-family="Liberation Sans">Kosice</text>
<text x="1280" y="1022.5" font-size="10" fill="#717171" font-weight="normal" font-style="normal" letter-spacing="0" text-anchor="middle" font-family="Liberation Sans">Banska</text>
<text x="1280" y="1032.5" font-size="10" fill="#717171" font-weight="normal" font-style="normal" letter-spacing="0" text-anchor="middle" font-family="Liberation Sans">Bystrica</text>
<text x="1202" y="874.2" font-size="12" fill="#858585" font-weight="bold" font-style="normal" letter-spacing="0" text-anchor="middle" font-family="Liberation Sans">Ostrava</text>
<text x="1108" y="908.5" font-size="10" fill="#717171" font-weight="normal" font-style="normal" letter-spacing="0" text-anchor="middle" font-family="Liberation Sans">Olomouc</text>
<text x="1146" y="959.5" font-size="10" fill="#717171" font-weight="normal" font-style="normal" letter-spacing="0" text-anchor="middle" font-family="Liberation Sans">Zlin</text>
<text x="1244" y="959.5" font-size="10" fill="#717171" font-weight="normal" font-style="normal" letter-spacing="0" text-anchor="middle" font-family="Liberation Sans">Zilina</text>
<text x="1180" y="1005.5" font-size="10" fill="#717171" font-weight="normal" font-style="normal" letter-spacing="0" text-anchor="middle" font-family="Liberation Sans">Trencin</text>
<text x="1138" y="1076.5" font-size="10" fill="#717171" font-weight="normal" font-style="normal" letter-spacing="0" text-anchor="middle" font-family="Liberation Sans">Trnava</text>
<text x="1184" y="1085.5" font-size="10" fill="#717171" font-weight="normal" font-style="normal" letter-spacing="0" text-anchor="middle" font-family="Liberation Sans">Nitra</text>
<text x="1095" y="1107.8" font-size="11" fill="#858585" font-weight="bold" font-style="normal" letter-spacing="0" text-anchor="middle" font-family="Liberation Sans">Bratislava</text>
<text x="1027" y="1101.2" font-size="12" fill="#858585" font-weight="bold" font-style="normal" letter-spacing="0" text-anchor="middle" font-family="Liberation Sans">Vienna</text>
<text x="958" y="1100.5" font-size="10" fill="#717171" font-weight="normal" font-style="normal" letter-spacing="0" text-anchor="middle" font-family="Liberation Sans">St Polten</text>
<text x="838" y="1086.5" font-size="10" fill="#717171" font-weight="normal" font-style="normal" letter-spacing="0" text-anchor="middle" font-family="Liberation Sans">Linz</text>
<text x="807" y="1103.2" font-size="9" fill="#4f4f4f" font-weight="normal" font-style="normal" letter-spacing="1" text-anchor="middle" font-family="Liberation Sans">UPPER</text>
<text x="807" y="1115.2" font-size="9" fill="#4f4f4f" font-weight="normal" font-style="normal" letter-spacing="1" text-anchor="middle" font-family="Liberation Sans">AUSTRIA</text>
<text x="855" y="994.5" font-size="10" fill="#717171" font-weight="normal" font-style="normal" letter-spacing="0" text-anchor="middle" font-family="Liberation Sans">Rudweis</text>
<text x="1048" y="964.2" font-size="12" fill="#858585" font-weight="bold" font-style="normal" letter-spacing="0" text-anchor="middle" font-family="Liberation Sans">Brno</text>
<text x="958" y="935.5" font-size="10" fill="#717171" font-weight="normal" font-style="normal" letter-spacing="0" text-anchor="middle" font-family="Liberation Sans">Jihlava</text>
<text x="967" y="905.9" font-size="11" fill="#5a5a5a" font-weight="normal" font-style="normal" letter-spacing="3" text-anchor="middle" font-family="Liberation Sans">CZECHIA</text>
<text x="755" y="886.5" font-size="10" fill="#717171" font-weight="normal" font-style="normal" letter-spacing="0" text-anchor="middle" font-family="Liberation Sans">Pilsen</text>
<text x="852" y="840.2" font-size="12" fill="#858585" font-weight="bold" font-style="normal" letter-spacing="0" text-anchor="middle" font-family="Liberation Sans">Prague</text>
<text x="975" y="845.5" font-size="10" fill="#717171" font-weight="normal" font-style="normal" letter-spacing="0" text-anchor="middle" font-family="Liberation Sans">Pardubice</text>
<text x="977" y="815.5" font-size="10" fill="#717171" font-weight="normal" font-style="normal" letter-spacing="0" text-anchor="middle" font-family="Liberation Sans">Hradec</text>
<text x="977" y="826.5" font-size="10" fill="#717171" font-weight="normal" font-style="normal" letter-spacing="0" text-anchor="middle" font-family="Liberation Sans">Kralove</text>
<text x="908" y="740.5" font-size="10" fill="#717171" font-weight="normal" font-style="normal" letter-spacing="0" text-anchor="middle" font-family="Liberation Sans">Liberec</text>
<text x="814" y="751.5" font-size="10" fill="#717171" font-weight="normal" font-style="normal" letter-spacing="0" text-anchor="middle" font-family="Liberation Sans">Usti nad</text>
<text x="814" y="761.5" font-size="10" fill="#717171" font-weight="normal" font-style="normal" letter-spacing="0" text-anchor="middle" font-family="Liberation Sans">Labem</text>
<text x="720" y="730.5" font-size="10" fill="#717171" font-weight="normal" font-style="normal" letter-spacing="0" text-anchor="middle" font-family="Liberation Sans">mnitz</text>
<text x="717" y="818.5" font-size="10" fill="#717171" font-weight="normal" font-style="normal" letter-spacing="0" text-anchor="middle" font-family="Liberation Sans">lsad</text>
<text x="789" y="701.2" font-size="12" fill="#858585" font-weight="bold" font-style="normal" letter-spacing="0" text-anchor="middle" font-family="Liberation Sans">Dresden</text>
<text x="842" y="596.5" font-size="10" fill="#717171" font-weight="normal" font-style="normal" letter-spacing="0" text-anchor="middle" font-family="Liberation Sans">Cottbus</text>
<text x="755" y="484.9" font-size="11" fill="#999" font-weight="bold" font-style="normal" letter-spacing="0" text-anchor="middle" font-family="Liberation Sans">Berlin</text>
<text x="727" y="502.1" font-size="9" fill="#717171" font-weight="normal" font-style="normal" letter-spacing="0" text-anchor="middle" font-family="Liberation Sans">Potsdam</text>
<text x="805" y="496.5" font-size="10" fill="#555" font-weight="normal" font-style="normal" letter-spacing="2" text-anchor="middle" font-family="Liberation Sans">BRANDENBURG</text>
<text x="728" y="296.5" font-size="10" fill="#555" font-weight="normal" font-style="normal" letter-spacing="2" text-anchor="middle" font-family="Liberation Sans">STERN</text>
<g transform="translate(1176,237) scale(0.8,1)"><text x="0" y="0" font-size="16" fill="#1a1a1a" stroke="#1a1a1a" stroke-width="4.6" stroke-linejoin="round" font-weight="bold" text-anchor="middle" font-family="Liberation Sans">1 685</text><text x="0" y="0" font-size="16" fill="#1c1c1c" stroke="#fafafa" stroke-width="2.8" stroke-linejoin="round" paint-order="stroke" font-weight="bold" text-anchor="middle" font-family="Liberation Sans">1 685</text></g>
<g transform="translate(1463,284) scale(0.8,1)"><text x="0" y="0" font-size="16" fill="#1a1a1a" stroke="#1a1a1a" stroke-width="4.6" stroke-linejoin="round" font-weight="bold" text-anchor="middle" font-family="Liberation Sans">1 097</text><text x="0" y="0" font-size="16" fill="#1c1c1c" stroke="#fafafa" stroke-width="2.8" stroke-linejoin="round" paint-order="stroke" font-weight="bold" text-anchor="middle" font-family="Liberation Sans">1 097</text></g>
<g transform="translate(951,325) scale(0.8,1)"><text x="0" y="0" font-size="16" fill="#1a1a1a" stroke="#1a1a1a" stroke-width="4.6" stroke-linejoin="round" font-weight="bold" text-anchor="middle" font-family="Liberation Sans">795</text><text x="0" y="0" font-size="16" fill="#1c1c1c" stroke="#fafafa" stroke-width="2.8" stroke-linejoin="round" paint-order="stroke" font-weight="bold" text-anchor="middle" font-family="Liberation Sans">795</text></g>
<g transform="translate(1605,374) scale(0.8,1)"><text x="0" y="0" font-size="16" fill="#1a1a1a" stroke="#1a1a1a" stroke-width="4.6" stroke-linejoin="round" font-weight="bold" text-anchor="middle" font-family="Liberation Sans">621</text><text x="0" y="0" font-size="16" fill="#1c1c1c" stroke="#fafafa" stroke-width="2.8" stroke-linejoin="round" paint-order="stroke" font-weight="bold" text-anchor="middle" font-family="Liberation Sans">621</text></g>
<g transform="translate(1220,403) scale(0.8,1)"><text x="0" y="0" font-size="16" fill="#1a1a1a" stroke="#1a1a1a" stroke-width="4.6" stroke-linejoin="round" font-weight="bold" text-anchor="middle" font-family="Liberation Sans">1 275</text><text x="0" y="0" font-size="16" fill="#1c1c1c" stroke="#fafafa" stroke-width="2.8" stroke-linejoin="round" paint-order="stroke" font-weight="bold" text-anchor="middle" font-family="Liberation Sans">1 275</text></g>
<g transform="translate(928,534) scale(0.8,1)"><text x="0" y="0" font-size="16" fill="#1a1a1a" stroke="#1a1a1a" stroke-width="4.6" stroke-linejoin="round" font-weight="bold" text-anchor="middle" font-family="Liberation Sans">698</text><text x="0" y="0" font-size="16" fill="#1c1c1c" stroke="#fafafa" stroke-width="2.8" stroke-linejoin="round" paint-order="stroke" font-weight="bold" text-anchor="middle" font-family="Liberation Sans">698</text></g>
<g transform="translate(1113,514) scale(0.8,1)"><text x="0" y="0" font-size="16" fill="#1a1a1a" stroke="#1a1a1a" stroke-width="4.6" stroke-linejoin="round" font-weight="bold" text-anchor="middle" font-family="Liberation Sans">2 034</text><text x="0" y="0" font-size="16" fill="#1c1c1c" stroke="#fafafa" stroke-width="2.8" stroke-linejoin="round" paint-order="stroke" font-weight="bold" text-anchor="middle" font-family="Liberation Sans">2 034</text></g>
<g transform="translate(1462,512) scale(0.8,1)"><text x="0" y="0" font-size="16" fill="#1a1a1a" stroke="#1a1a1a" stroke-width="4.6" stroke-linejoin="round" font-weight="bold" text-anchor="middle" font-family="Liberation Sans">4 142</text><text x="0" y="0" font-size="16" fill="#1c1c1c" stroke="#fafafa" stroke-width="2.8" stroke-linejoin="round" paint-order="stroke" font-weight="bold" text-anchor="middle" font-family="Liberation Sans">4 142</text></g>
<g transform="translate(1302,622) scale(0.8,1)"><text x="0" y="0" font-size="16" fill="#1a1a1a" stroke="#1a1a1a" stroke-width="4.6" stroke-linejoin="round" font-weight="bold" text-anchor="middle" font-family="Liberation Sans">1 466</text><text x="0" y="0" font-size="16" fill="#1c1c1c" stroke="#fafafa" stroke-width="2.8" stroke-linejoin="round" paint-order="stroke" font-weight="bold" text-anchor="middle" font-family="Liberation Sans">1 466</text></g>
<g transform="translate(1019,697) scale(0.8,1)"><text x="0" y="0" font-size="16" fill="#1a1a1a" stroke="#1a1a1a" stroke-width="4.6" stroke-linejoin="round" font-weight="bold" text-anchor="middle" font-family="Liberation Sans">1 672</text><text x="0" y="0" font-size="16" fill="#1c1c1c" stroke="#fafafa" stroke-width="2.8" stroke-linejoin="round" paint-order="stroke" font-weight="bold" text-anchor="middle" font-family="Liberation Sans">1 672</text></g>
<g transform="translate(1610,678) scale(0.8,1)"><text x="0" y="0" font-size="16" fill="#1a1a1a" stroke="#1a1a1a" stroke-width="4.6" stroke-linejoin="round" font-weight="bold" text-anchor="middle" font-family="Liberation Sans">840</text><text x="0" y="0" font-size="16" fill="#1c1c1c" stroke="#fafafa" stroke-width="2.8" stroke-linejoin="round" paint-order="stroke" font-weight="bold" text-anchor="middle" font-family="Liberation Sans">840</text></g>
<g transform="translate(1165,761) scale(0.8,1)"><text x="0" y="0" font-size="16" fill="#1a1a1a" stroke="#1a1a1a" stroke-width="4.6" stroke-linejoin="round" font-weight="bold" text-anchor="middle" font-family="Liberation Sans">357</text><text x="0" y="0" font-size="16" fill="#1c1c1c" stroke="#fafafa" stroke-width="2.8" stroke-linejoin="round" paint-order="stroke" font-weight="bold" text-anchor="middle" font-family="Liberation Sans">357</text></g>
<g transform="translate(1431,745) scale(0.8,1)"><text x="0" y="0" font-size="16" fill="#1a1a1a" stroke="#1a1a1a" stroke-width="4.6" stroke-linejoin="round" font-weight="bold" text-anchor="middle" font-family="Liberation Sans">535</text><text x="0" y="0" font-size="16" fill="#1c1c1c" stroke="#fafafa" stroke-width="2.8" stroke-linejoin="round" paint-order="stroke" font-weight="bold" text-anchor="middle" font-family="Liberation Sans">535</text></g>
<g transform="translate(1261,806) scale(0.8,1)"><text x="0" y="0" font-size="16" fill="#1a1a1a" stroke="#1a1a1a" stroke-width="4.6" stroke-linejoin="round" font-weight="bold" text-anchor="middle" font-family="Liberation Sans">4 030</text><text x="0" y="0" font-size="16" fill="#1c1c1c" stroke="#fafafa" stroke-width="2.8" stroke-linejoin="round" paint-order="stroke" font-weight="bold" text-anchor="middle" font-family="Liberation Sans">4 030</text></g>
<g transform="translate(1381,873) scale(0.8,1)"><text x="0" y="0" font-size="16" fill="#1a1a1a" stroke="#1a1a1a" stroke-width="4.6" stroke-linejoin="round" font-weight="bold" text-anchor="middle" font-family="Liberation Sans">2 050</text><text x="0" y="0" font-size="16" fill="#1c1c1c" stroke="#fafafa" stroke-width="2.8" stroke-linejoin="round" paint-order="stroke" font-weight="bold" text-anchor="middle" font-family="Liberation Sans">2 050</text></g>
<g transform="translate(1553,860) scale(0.8,1)"><text x="0" y="0" font-size="16" fill="#1a1a1a" stroke="#1a1a1a" stroke-width="4.6" stroke-linejoin="round" font-weight="bold" text-anchor="middle" font-family="Liberation Sans">1 319</text><text x="0" y="0" font-size="16" fill="#1c1c1c" stroke="#fafafa" stroke-width="2.8" stroke-linejoin="round" paint-order="stroke" font-weight="bold" text-anchor="middle" font-family="Liberation Sans">1 319</text></g>
<rect x="1769" y="47" width="66" height="32" fill="#333"/>
<path d="M1781.5 56.5 h9 v15 l-4.5 -4 l-4.5 4 z" fill="none" stroke="#e0e0e0" stroke-width="1.2"/>
<rect x="1811" y="56.0" width="3" height="3" fill="#e0e0e0"/>
<rect x="1816" y="56.7" width="9" height="1.6" fill="#e0e0e0"/>
<rect x="1811" y="60.0" width="3" height="3" fill="#e0e0e0"/>
<rect x="1816" y="60.7" width="9" height="1.6" fill="#e0e0e0"/>
<rect x="1811" y="64.0" width="3" height="3" fill="#e0e0e0"/>
<rect x="1816" y="64.7" width="9" height="1.6" fill="#e0e0e0"/>
<rect x="1811" y="68.0" width="3" height="3" fill="#e0e0e0"/>
<rect x="1816" y="68.7" width="9" height="1.6" fill="#e0e0e0"/>
<rect x="1806" y="1037" width="27" height="54" fill="#333"/>
<line x1="1809" y1="1064" x2="1830" y2="1064" stroke="#444" stroke-width="1"/>
<path d="M1813 1050 h12 M1819 1044 v12" stroke="#e6e6e6" stroke-width="1.6"/>
<path d="M1813 1077 h12" stroke="#e6e6e6" stroke-width="1.6"/>
<rect x="1355" y="1098" width="477" height="15" fill="#c9c9c9" opacity="0.92"/>
<text x="1358" y="1110" font-size="12.4" fill="#333" font-family="Liberation Sans">Esri, HERE, Garmin, FAO, NOAA, USGS | Esri, HERE, Garmin, FAO, NOAA, USGS</text>
</svg>
<svg class="abs" style="left:1831px;top:35px" width="22" height="22" viewBox="0 0 22 22"><circle cx="11" cy="10" r="8.5" fill="#222" stroke="#bbb" stroke-width="1.2"/><path d="M7 6 l3 3 M7 6 h2.5 M7 6 v2.5 M15 6 l-3 3 M15 6 h-2.5 M15 6 v2.5 M7 14 l3 -3 M7 14 h2.5 M7 14 v-2.5 M15 14 l-3 -3 M15 14 h-2.5 M15 14 v-2.5" stroke="#bbb" stroke-width="1" fill="none"/></svg>
<div class="tab act" style="left:721px;top:1118px;width:151px;height:28px;line-height:26px">Dzienne potwierdzone</div>
<div class="tab" style="left:877px;top:1119px;width:231px;height:26px;line-height:24px">Potwierdzone na 10tys. mieszkańców</div>
<div class="tab" style="left:1113px;top:1119px;width:133px;height:26px;line-height:24px">Śmiertelne dzienne</div>
<div class="pnl" style="left:708px;top:1158px;width:1135px;height:279px;"><div class="abs" style="left:5px;top:6px;font-size:14.5px;color:#dcdcdc;text-decoration:underline">Źródła danych</div>
<div class="abs" style="left:5px;top:40px;font-size:14.2px;line-height:17px;color:#d4d4d4;white-space:nowrap">Liczba zachorowań i zgonów dla Polski: <i style="color:#3d82d6">Ministerstwo Zdrowia</i><br>Dane o zachorowaniach: <i>na podst.:</i> <i style="color:#3d82d6">Johns Hopkins CSSE</i><br>Dane o populacji: <i style="color:#3d82d6">GUS</i></div>
<div class="abs" style="left:5px;top:108px;height:17px;width:127px;background:#d5dce4;color:#3c8ad6;font-weight:bold;font-size:13.4px;line-height:17px;padding-left:1px;white-space:nowrap">WERSJA MOBILNA</div>
<div class="abs" style="left:940px;top:8px;width:160px;text-align:center;font-size:14px;color:#d6d6d6">Aktualizacja</div>
<div class="abs" style="left:944px;top:37px;width:160px;text-align:center;font-size:14px;color:#d0d0d0">17/3/2021, 10:30</div></div>
</body></html>
